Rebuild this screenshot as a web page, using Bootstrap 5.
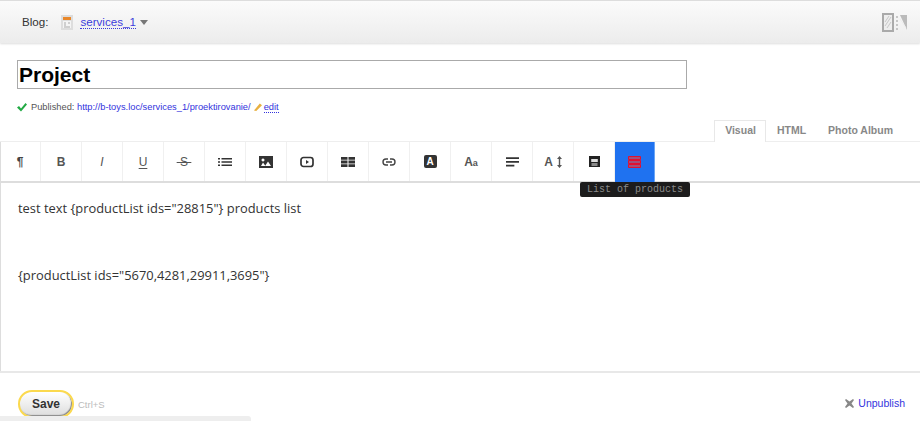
<!DOCTYPE html>
<html lang="en">
<head>
  <meta charset="UTF-8" />
  <title>Edit post</title>
  <link href="https://cdn.jsdelivr.net/npm/bootstrap@5.3.0/dist/css/bootstrap.min.css" rel="stylesheet"/>
  <style>
    html, body { height: 421px; overflow: hidden; }
    body { font-family: "Liberation Sans", Arial, sans-serif; background: #fff; color: #333; }
    a { color: #3333dd; }
    .page-wrap { height: 421px; position: relative; overflow: hidden; }
    .top-bar { height: 43px; background: linear-gradient(#fbfbfb, #ececec); border-top: 1px solid #ddd; box-shadow: 0 1px 2px #ddd; padding: 0 12px 0 22px; font-size: 11.6px; }
    .blog-link { color: #3c3cdc; text-decoration: none; border-bottom: 1px dotted #3c3cdc; line-height: 12px; margin-left: 7px; }
    .blog-caret { width: 0; height: 0; border: 4px solid transparent; border-top: 5px solid #777; border-bottom: 0; margin-left: 4px; }
    .blog-icon { margin-left: 13px; }
    .title-box { margin: 17px 0 0 17px; width: 670px; height: 29px; border: 1px solid #aaa; font: bold 21px/27px "Liberation Sans", Arial, sans-serif; color: #000; padding: 0 1px; }
    .pub-row { margin: 11px 0 0 17px; height: 14px; font-size: 9.3px; color: #555; line-height: 14px; }
    .pub-row a { text-decoration: none; }
    .pub-row .edit-link { text-decoration: none; border-bottom: 1px dotted #3333dd; line-height: 10px; margin-left: 2px; }
    .pencil-icon { margin-left: 3px; }
    .tab-row { height: 21px; margin-top: 6px; padding-right: 16px; font-size: 10.5px; font-weight: bold; color: #888; }
    .tab-item { padding: 0 10px; line-height: 19px; border: 1px solid transparent; border-bottom: 0; }
    .tab-item.is-on { padding: 0 9px 0 10px; margin-left: 1px; border-color: #e8e8e8; background: #fff; margin-bottom: -1px; height: 22px; position: relative; }
    .edit-area { border-left: 1px solid #ddd; height: 232px; }
    .tool-bar { height: 42px; border-top: 1px solid #eee; border-bottom: 2px solid #ddd; margin-left: -1px; }
    .tool-btn { width: 41px; height: 39px; border-right: 1px solid #f0f0f0; color: #555; font-size: 12px; line-height: 1; }
    .tool-btn svg { display: block; }
    .tool-btn .pilcrow { color: #444; font-weight: bold; }
    .tool-btn .under-glyph { text-decoration: underline; text-underline-offset: 2px; }
    .tool-btn .strike-glyph { text-decoration: line-through; }
    .tool-btn .small-a { font-size: 9px; }
    .tool-btn .glyph-bold { font-weight: bold; }
    .box-glyph { width: 13px; height: 13px; background: #333; color: #fff; border-radius: 2px; font: bold 10px/13px "Liberation Sans", Arial, sans-serif; text-align: center; }
    .tool-btn.is-hover { background: #1f72f0; width: 40px; height: 40px; border: 0; border-right: 1px solid #6aa5f5; }
    .tip-box { position: absolute; left: 580px; top: 182px; width: 110px; background: #1c1c1c; color: #8a8a8a; font: 10px/15px "Liberation Mono", monospace; padding: 0 7px; border-radius: 2px; white-space: nowrap; }
    .text-pane { padding: 17px 18px; font: 12.9px/17px "Open Sans", sans-serif; color: #333; height: 190px; border-bottom: 2px solid #e8e8e8; margin-left: -1px; }
    .text-pane p { margin: 0 0 50px; }
    .foot-row { padding: 17px 15px 0 18px; font-size: 10.5px; }
    .save-btn { width: 56px; height: 28px; border: 2px solid #fbd94e; border-radius: 14px; background: linear-gradient(#fff, #ddd); box-shadow: inset -1px -1px 1px #888; font: bold 12px "Liberation Sans", Arial, sans-serif; color: #333; padding: 0; }
    .hint-text { color: #bbb; font-size: 9.5px; margin-left: 4px; margin-top: 8px; }
    .unpub-box { margin-top: 6px; }
    .bottom-strip { position: absolute; left: 0; bottom: 0; width: 251px; height: 5px; background: #eee; border-top-right-radius: 3px; }
  </style>
</head>
<body>
<div class="page-wrap">
  <div class="top-bar d-flex align-items-center">
    <span>Blog:</span>
    <svg class="blog-icon" width="12" height="15" viewBox="0 0 12 15"><rect x="0" y="0" width="12" height="15" fill="#ddd"/><rect x="2" y="2" width="8" height="3" fill="#e8872a"/><rect x="2" y="6" width="8" height="7" fill="#f4f4f4"/><path d="M3 8h2M3 10h2M3 12h6M7 8h2" stroke="#aaa"/></svg>
    <a class="blog-link" href="#">services_1</a>
    <span class="blog-caret"></span>
    <svg class="ms-auto" width="26" height="19" viewBox="0 0 26 19"><rect x="1" y="1" width="10" height="17" fill="#eee" stroke="#aaa" stroke-width="2"/><path d="M3 13 9 4M3 9l4-6M5 15l4-6" stroke="#c8c8c8"/><path d="M15 3v14" stroke="#999" stroke-dasharray="2 2"/><path d="M18 2h7v15z" fill="#bbb"/><path d="M18 6l6 9" stroke="#eee"/></svg>
  </div>

  <div class="title-box">Project</div>

  <div class="pub-row d-flex align-items-center">
    <svg width="10" height="9" viewBox="0 0 10 9" class="me-1"><path d="M0 4.500 2 3l2 2.500L8.500 0 10 1.500 4 8.500z" fill="#22aa44"/></svg>
    <span>Published:&nbsp;</span><a href="#">http://b-toys.loc/services_1/proektirovanie/</a>
    <svg class="pencil-icon" width="8" height="10" viewBox="0 0 9 10"><path d="M0 9 6.500 1 9 3 2.500 9.500z" fill="#e8b040"/></svg>
    <a class="edit-link" href="#">edit</a>
  </div>

  <div class="tab-row d-flex justify-content-end">
    <span class="tab-item is-on">Visual</span>
    <span class="tab-item">HTML</span>
    <span class="tab-item">Photo Album</span>
  </div>

  <div class="edit-area">
    <div class="tool-bar d-flex">
      <div class="tool-btn d-flex align-items-center justify-content-center"><span class="pilcrow">¶</span></div>
      <div class="tool-btn d-flex align-items-center justify-content-center"><span class="glyph-bold">B</span></div>
      <div class="tool-btn d-flex align-items-center justify-content-center"><i>I</i></div>
      <div class="tool-btn d-flex align-items-center justify-content-center"><span class="under-glyph">U</span></div>
      <div class="tool-btn d-flex align-items-center justify-content-center"><span class="strike-glyph">&nbsp;S&nbsp;</span></div>
      <div class="tool-btn d-flex align-items-center justify-content-center"><svg width="14" height="10" viewBox="0 0 14 10"><path d="M0 1h2v1.500H0zM0 4.300h2v1.500H0zM0 7.500h2V9H0zM3.500 1H14v1.500H3.500zM3.500 4.300H14v1.500H3.500zM3.500 7.500H14V9H3.500z" fill="#333"/></svg></div>
      <div class="tool-btn d-flex align-items-center justify-content-center"><svg width="14" height="12" viewBox="0 0 14 12"><path fill-rule="evenodd" d="M0 0h14v12H0zM4 2.500a1.500 1.500 0 1 0 .01 0zM2 10h4.500L4 6.500zM6 10h6L9 5.500z" fill="#333"/></svg></div>
      <div class="tool-btn d-flex align-items-center justify-content-center"><svg width="14" height="12" viewBox="0 0 14 12"><rect x="1" y="1.500" width="12" height="9" rx="2.500" fill="none" stroke="#333" stroke-width="1.700"/><path d="M6 4v4l3-2z" fill="#333"/></svg></div>
      <div class="tool-btn d-flex align-items-center justify-content-center"><svg width="14" height="10" viewBox="0 0 14 10"><path d="M0 0h6.500v2.800H0zM7.500 0H14v2.800H7.500zM0 3.600h6.500v2.800H0zM7.500 3.600H14v2.800H7.500zM0 7.200h6.500V10H0zM7.500 7.200H14V10H7.500z" fill="#333"/></svg></div>
      <div class="tool-btn d-flex align-items-center justify-content-center"><svg width="14" height="8" viewBox="0 0 14 8"><path d="M6 1H4a3 3 0 0 0 0 6h2M8 1h2a3 3 0 0 1 0 6H8M4 4h6" fill="none" stroke="#444" stroke-width="1.400"/></svg></div>
      <div class="tool-btn d-flex align-items-center justify-content-center"><span class="box-glyph">A</span></div>
      <div class="tool-btn d-flex align-items-center justify-content-center"><span class="glyph-bold">A<span class="small-a">a</span></span></div>
      <div class="tool-btn d-flex align-items-center justify-content-center"><svg width="13" height="10" viewBox="0 0 14 10"><path d="M0 0h14v1.800H0zM0 4h14v1.800H0zM0 8h9v1.800H0z" fill="#333"/></svg></div>
      <div class="tool-btn d-flex align-items-center justify-content-center"><span class="glyph-bold">A</span><svg class="ms-1" width="5" height="12" viewBox="0 0 5 12"><path d="M2.500 0 5 3H3.200v6H5l-2.500 3L0 9h1.800V3H0z" fill="#555"/></svg></div>
      <div class="tool-btn d-flex align-items-center justify-content-center"><svg width="11" height="11" viewBox="0 0 11 11"><path d="M0 0h11v3H0zM0 6h11v5H0z" fill="#222"/><path d="M0 3h2.500v3H0zM8.500 3H11v3H8.500z" fill="#222"/><rect x="2.500" y="3" width="6" height="3" fill="#ddd"/><rect x="2.500" y="7" width="6" height="3" fill="#888"/></svg></div>
      <div class="tool-btn is-hover d-flex align-items-center justify-content-center"><svg width="13" height="12" viewBox="0 0 13 12"><path d="M.5.500h12v3H.5zM.5 4.500h12v3H.5zM.5 8.500h12v3H.5z" fill="#a0507a" stroke="#e01030"/></svg></div>
    </div>
    <div class="text-pane">
      <p>test text {productList ids="28815"} products list</p>
      <p>{productList ids="5670,4281,29911,3695"}</p>
    </div>
  </div>

  <div class="foot-row d-flex align-items-start">
    <button class="save-btn" type="button">Save</button>
    <span class="hint-text">Ctrl+S</span>
    <span class="unpub-box ms-auto d-flex align-items-center">
      <svg width="9" height="9" viewBox="0 0 9 9" class="me-1"><path d="M1 0 4.500 2.500 8 0l1 1-2.500 3.500L9 8l-1 1-3.500-2.500L1 9 0 8l2.500-3.500L0 1z" fill="#888"/></svg>
      <a href="#" class="text-decoration-none">Unpublish</a>
    </span>
  </div>

  <div class="tip-box">List of products</div>
  <div class="bottom-strip"></div>
</div>
</body>
</html>
